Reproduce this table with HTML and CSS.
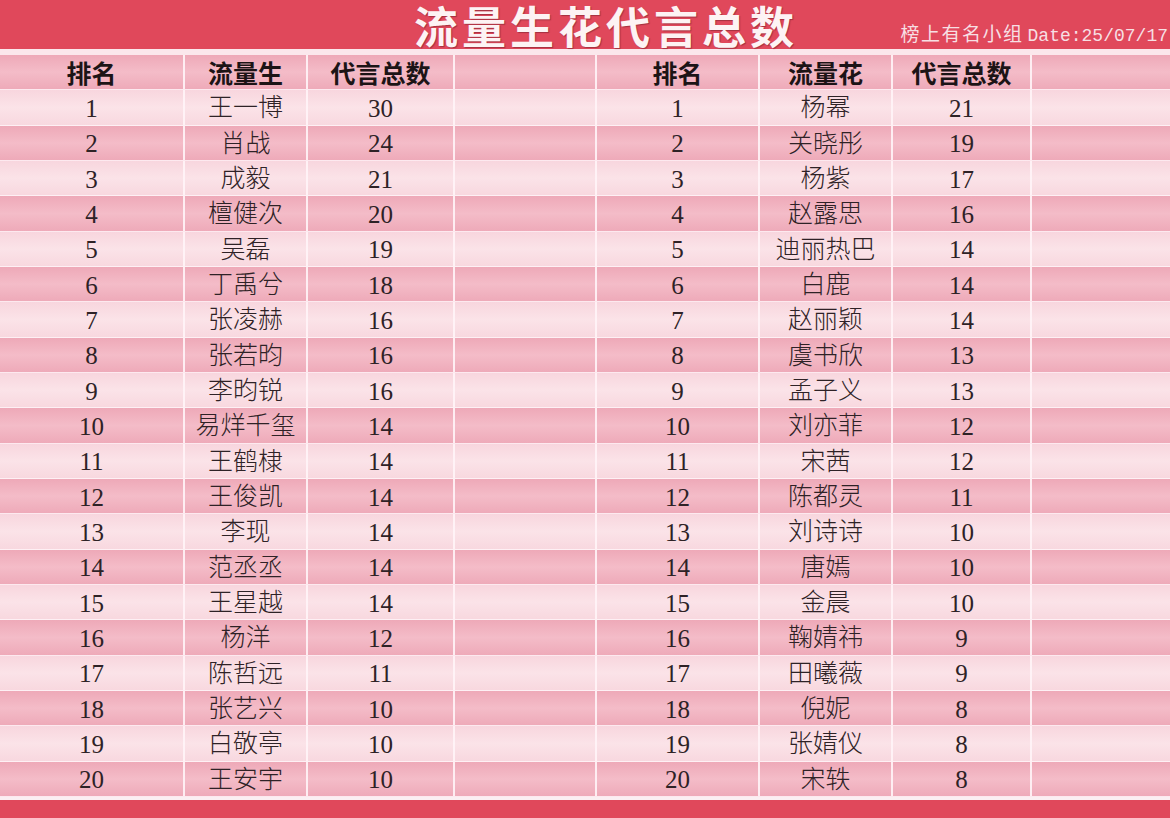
FILE: index.html
```html
<!DOCTYPE html>
<html lang="zh-CN">
<head>
<meta charset="utf-8">
<title>流量生花代言总数</title>
<link rel="stylesheet" href="styles.css">
</head>
<body>
<div class="page">
  <header class="banner">
    <h1 class="title">流量生花代言总数</h1>
    <div class="sub"><span class="sub-cn">榜上有名小组</span> <span class="sub-en">Date:25/07/17</span></div>
  </header>
  <div class="sheet">
    <div class="row head"><div class="c">排名</div><div class="c">流量生</div><div class="c">代言总数</div><div class="c"></div><div class="c">排名</div><div class="c">流量花</div><div class="c">代言总数</div><div class="c"></div></div>
    <div class="row light"><div class="c n">1</div><div class="c">王一博</div><div class="c n">30</div><div class="c"></div><div class="c n">1</div><div class="c">杨幂</div><div class="c n">21</div><div class="c"></div></div>
    <div class="row dark"><div class="c n">2</div><div class="c">肖战</div><div class="c n">24</div><div class="c"></div><div class="c n">2</div><div class="c">关晓彤</div><div class="c n">19</div><div class="c"></div></div>
    <div class="row light"><div class="c n">3</div><div class="c">成毅</div><div class="c n">21</div><div class="c"></div><div class="c n">3</div><div class="c">杨紫</div><div class="c n">17</div><div class="c"></div></div>
    <div class="row dark"><div class="c n">4</div><div class="c">檀健次</div><div class="c n">20</div><div class="c"></div><div class="c n">4</div><div class="c">赵露思</div><div class="c n">16</div><div class="c"></div></div>
    <div class="row light"><div class="c n">5</div><div class="c">吴磊</div><div class="c n">19</div><div class="c"></div><div class="c n">5</div><div class="c">迪丽热巴</div><div class="c n">14</div><div class="c"></div></div>
    <div class="row dark"><div class="c n">6</div><div class="c">丁禹兮</div><div class="c n">18</div><div class="c"></div><div class="c n">6</div><div class="c">白鹿</div><div class="c n">14</div><div class="c"></div></div>
    <div class="row light"><div class="c n">7</div><div class="c">张凌赫</div><div class="c n">16</div><div class="c"></div><div class="c n">7</div><div class="c">赵丽颖</div><div class="c n">14</div><div class="c"></div></div>
    <div class="row dark"><div class="c n">8</div><div class="c">张若昀</div><div class="c n">16</div><div class="c"></div><div class="c n">8</div><div class="c">虞书欣</div><div class="c n">13</div><div class="c"></div></div>
    <div class="row light"><div class="c n">9</div><div class="c">李昀锐</div><div class="c n">16</div><div class="c"></div><div class="c n">9</div><div class="c">孟子义</div><div class="c n">13</div><div class="c"></div></div>
    <div class="row dark"><div class="c n">10</div><div class="c">易烊千玺</div><div class="c n">14</div><div class="c"></div><div class="c n">10</div><div class="c">刘亦菲</div><div class="c n">12</div><div class="c"></div></div>
    <div class="row light"><div class="c n">11</div><div class="c">王鹤棣</div><div class="c n">14</div><div class="c"></div><div class="c n">11</div><div class="c">宋茜</div><div class="c n">12</div><div class="c"></div></div>
    <div class="row dark"><div class="c n">12</div><div class="c">王俊凯</div><div class="c n">14</div><div class="c"></div><div class="c n">12</div><div class="c">陈都灵</div><div class="c n">11</div><div class="c"></div></div>
    <div class="row light"><div class="c n">13</div><div class="c">李现</div><div class="c n">14</div><div class="c"></div><div class="c n">13</div><div class="c">刘诗诗</div><div class="c n">10</div><div class="c"></div></div>
    <div class="row dark"><div class="c n">14</div><div class="c">范丞丞</div><div class="c n">14</div><div class="c"></div><div class="c n">14</div><div class="c">唐嫣</div><div class="c n">10</div><div class="c"></div></div>
    <div class="row light"><div class="c n">15</div><div class="c">王星越</div><div class="c n">14</div><div class="c"></div><div class="c n">15</div><div class="c">金晨</div><div class="c n">10</div><div class="c"></div></div>
    <div class="row dark"><div class="c n">16</div><div class="c">杨洋</div><div class="c n">12</div><div class="c"></div><div class="c n">16</div><div class="c">鞠婧祎</div><div class="c n">9</div><div class="c"></div></div>
    <div class="row light"><div class="c n">17</div><div class="c">陈哲远</div><div class="c n">11</div><div class="c"></div><div class="c n">17</div><div class="c">田曦薇</div><div class="c n">9</div><div class="c"></div></div>
    <div class="row dark"><div class="c n">18</div><div class="c">张艺兴</div><div class="c n">10</div><div class="c"></div><div class="c n">18</div><div class="c">倪妮</div><div class="c n">8</div><div class="c"></div></div>
    <div class="row light"><div class="c n">19</div><div class="c">白敬亭</div><div class="c n">10</div><div class="c"></div><div class="c n">19</div><div class="c">张婧仪</div><div class="c n">8</div><div class="c"></div></div>
    <div class="row dark"><div class="c n">20</div><div class="c">王安宇</div><div class="c n">10</div><div class="c"></div><div class="c n">20</div><div class="c">宋轶</div><div class="c n">8</div><div class="c"></div></div>
  </div>
  <footer class="bottom"></footer>
</div>
</body>
</html>
```
FILE: styles.css
```css
* { box-sizing: border-box; }
html, body { margin: 0; padding: 0; }
body {
  width: 1170px;
  height: 818px;
  overflow: hidden;
  background: #fbe7ec;
  font-family: "Liberation Serif", "Noto Sans CJK SC", serif;
}
.page {
  display: flex;
  flex-direction: column;
  width: 1170px;
  height: 818px;
}
.banner {
  height: 49px;
  background: #e0485b;
  display: flex;
  align-items: flex-end;
  padding-left: 414px;
  flex: none;
}
.title {
  margin: 0;
  font-family: "Noto Sans CJK SC", sans-serif;
  font-weight: 700;
  font-size: 44px;
  line-height: 47px;
  letter-spacing: 4px;
  color: #fdf3f4;
  text-shadow: 1px 1px 1px rgba(90, 20, 30, 0.45);
  align-self: center;
  padding-top: 2px;
}
.sub {
  margin-left: auto;
  padding-right: 2px;
  padding-bottom: 3px;
  color: #f7dfe3;
  line-height: 20px;
  white-space: nowrap;
}
.sub-cn {
  font-family: "Noto Sans CJK SC", sans-serif;
  font-weight: 400;
  font-size: 19px;
  letter-spacing: 1.5px;
}
.sub-en {
  font-family: "Liberation Mono", monospace;
  font-size: 18px;
}
.sheet {
  margin-top: 6px;
  height: 742px;
  display: grid;
  grid-template-rows: repeat(21, minmax(0, 1fr));
  flex: none;
}
.row {
  display: grid;
  grid-template-columns: 185px 123px 147px 142px 163px 133px 139px 138px;
  border-bottom: 1px solid rgba(255, 245, 248, 0.85);
  min-height: 0;
  overflow: hidden;
}
.row.light {
  background: linear-gradient(180deg, #f8d6de 0%, #fbe3e8 50%, #f8d8df 100%);
}
.row.dark, .row.head {
  background: linear-gradient(180deg, #eea9b8 0%, #f4bcc8 50%, #eeaab9 100%);
}
.c {
  display: flex;
  align-items: center;
  justify-content: center;
  border-right: 2px solid rgba(255, 244, 247, 0.9);
  font-family: "Liberation Serif", "Noto Sans CJK SC", serif;
  font-size: 25px;
  font-weight: 300;
  line-height: 1;
  color: #2e2226;
  min-height: 0;
  white-space: nowrap;
  padding-top: 1px;
}
.c:last-child { border-right: none; }
.c.n { font-size: 25px; font-weight: 400; padding-top: 2px; }
.head .c {
  font-family: "Noto Sans CJK SC", sans-serif;
  font-weight: 700;
  font-size: 25px;
  color: #1c1416;
  padding-top: 0;
}
.bottom {
  flex: 1;
  background: #e0485b;
  border-top: 3px solid #fbeff2;
}
```
